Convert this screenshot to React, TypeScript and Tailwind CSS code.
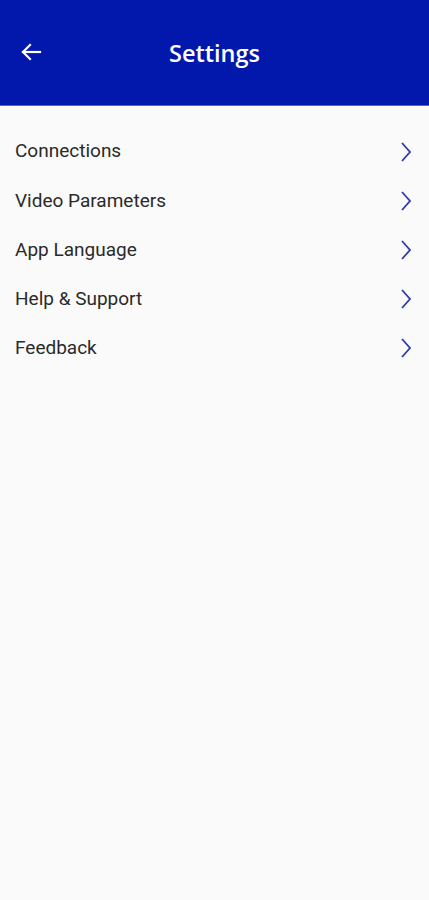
import React from "react";

const items = ["Connections", "Video Parameters", "App Language", "Help & Support", "Feedback"];

export default function App() {
  return (
    <div className="w-[429px] h-[900px] bg-[#fafafa] flex flex-col" style={{ fontFamily: "Roboto, sans-serif" }}>
      <div className="h-[106px] bg-[#0218ad] flex items-center relative shrink-0 border-b border-[#5a64c4]">
        <div className="pl-[19px] pb-[2px] flex items-center">
          <svg width="24" height="24" viewBox="0 0 24 24" fill="none" stroke="white" strokeWidth="2.2" strokeLinecap="square">
            <path d="M21 12H4" />
            <path d="M11 5l-7 7 7 7" />
          </svg>
        </div>
        <div className="absolute inset-0 flex items-center justify-center text-white text-[23.5px] font-semibold pt-[3px]" style={{ fontFamily: "'Open Sans', sans-serif" }}>
          Settings
        </div>
      </div>
      <div className="flex flex-col">
        <div className="h-[21px]" />
        {items.map((t) => (
          <div key={t} className="flex items-center justify-between pl-[15px] pr-[16px] h-[49.2px]">
            <span className="text-[19px] text-[#2a2a2a]">{t}</span>
            <svg width="14" height="22" viewBox="0 0 14 22" fill="none" stroke="#2f3aa8" strokeWidth="1.8">
              <path d="M3 2l8 9-8 9" />
            </svg>
          </div>
        ))}
      </div>
    </div>
  );
}
